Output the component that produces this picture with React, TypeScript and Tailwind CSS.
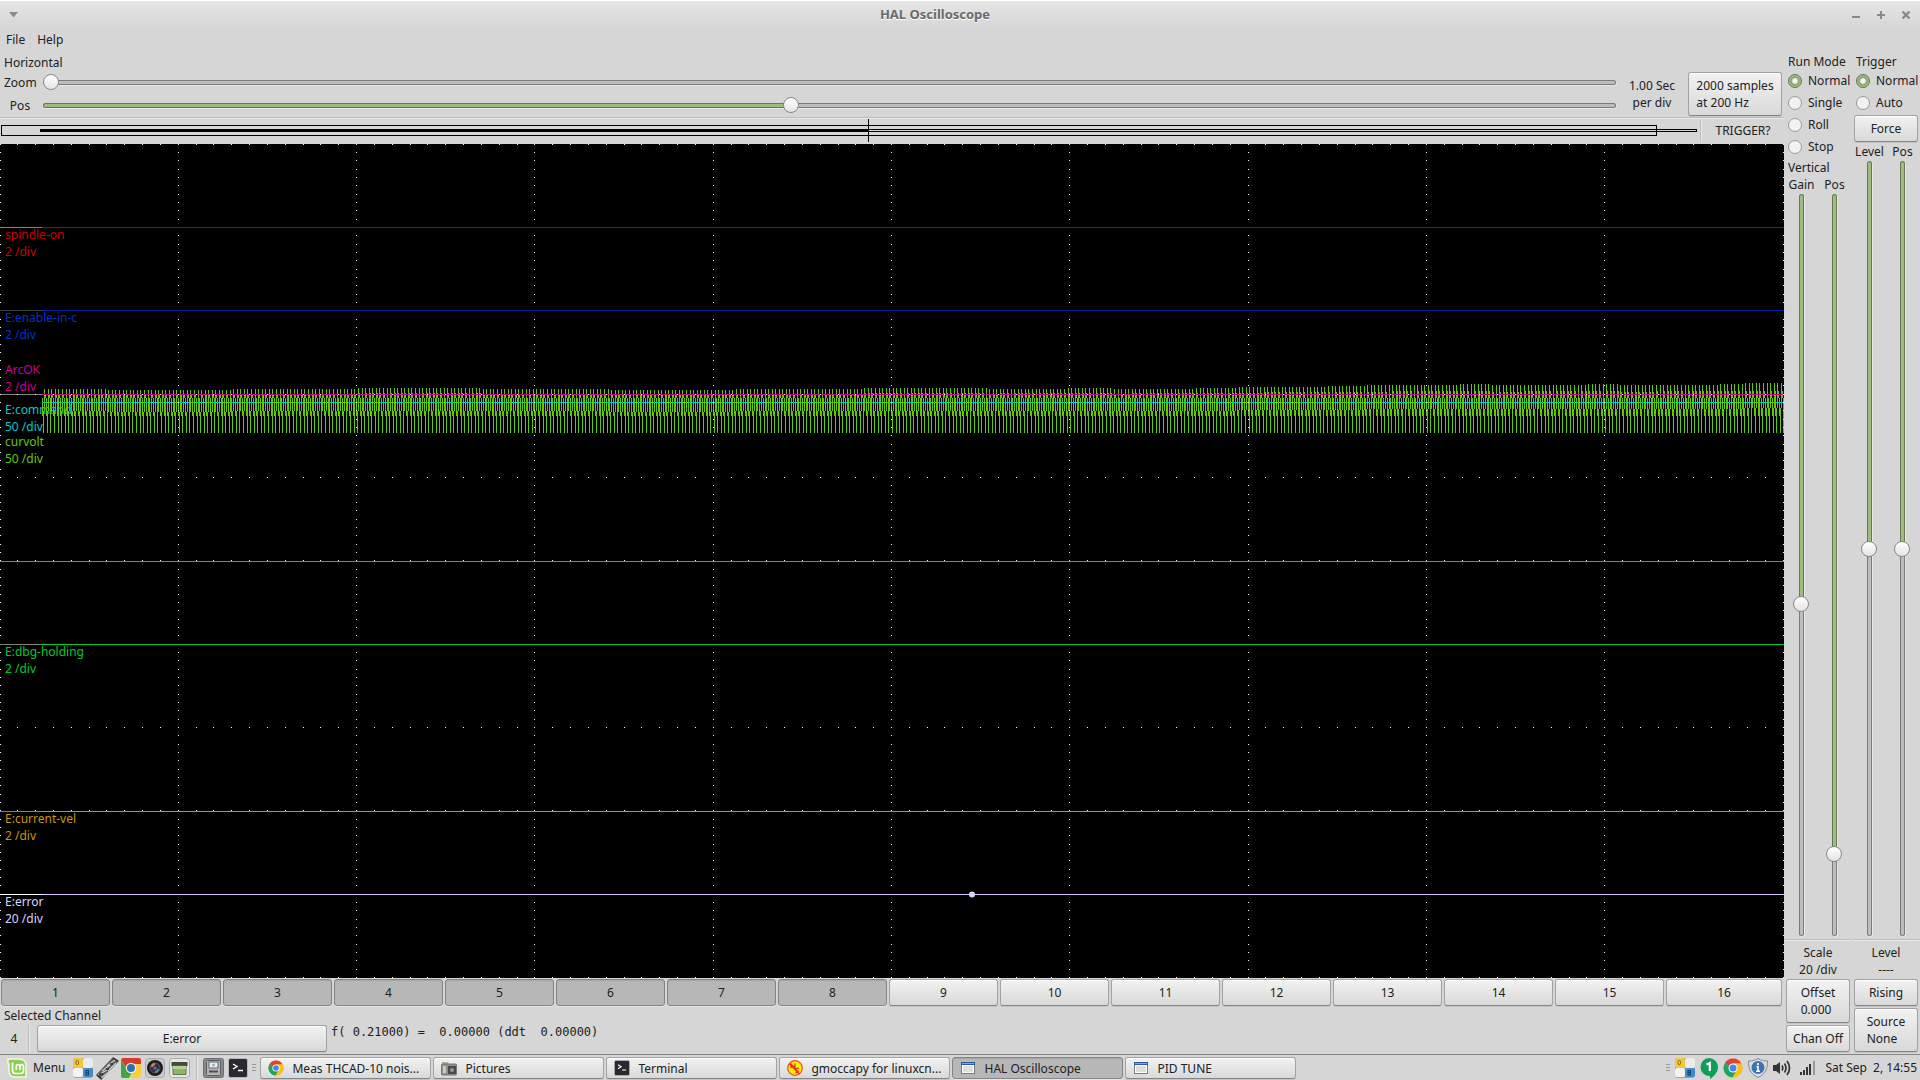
import React, { useId, useState } from 'react';
import clsx from 'clsx';

interface IChannel {
  name: string;
  scale: string;
  className: string;
  top: number;
}

interface ITrace {
  y: number;
  color: string;
  base: string;
}

const PLOT_W = 1784;
const PLOT_H = 834;

const channels: IChannel[] = [
  { name: 'spindle-on', scale: '2 /div', className: 'text-[#c80000]', top: 82 },
  { name: 'E:enable-in-c', scale: '2 /div', className: 'text-[#0032c8]', top: 165 },
  { name: 'ArcOK', scale: '2 /div', className: 'text-[#c80096]', top: 217 },
  { name: 'E:command', scale: '50 /div', className: 'text-[#00c8c8]', top: 257 },
  { name: 'curvolt', scale: '50 /div', className: 'text-[#64c800]', top: 289 },
  { name: 'E:dbg-holding', scale: '2 /div', className: 'text-[#00c832]', top: 499 },
  { name: 'E:current-vel', scale: '2 /div', className: 'text-[#c89600]', top: 666 },
  { name: 'E:error', scale: '20 /div', className: 'text-[#dcd2ff]', top: 749 },
];

const traces: ITrace[] = [
  { y: 83, color: '#b40000', base: '#808080' },
  { y: 166, color: '#001ea0', base: '#404040' },
  { y: 417, color: '#808080', base: '#808080' },
  { y: 500, color: '#00c832', base: '#808080' },
  { y: 667, color: '#c89600', base: '#808080' },
  { y: 750, color: '#dcc8ff', base: '#ffffff' },
];

// Dotted graticule, 10 x 10 divisions with 10 dots each
const buildGrid = () => {
  let d = '';
  for (let row = 0; row <= 10; row++) {
    for (let i = 0; i <= 100; i++) {
      d += `M${Math.floor((1783 * i) / 100)} ${Math.floor((833.4 * row) / 10)}h1v1h-1z`;
    }
  }
  for (let col = 0; col <= 10; col++) {
    for (let i = 0; i <= 100; i++) {
      d += `M${Math.floor((1783 * col) / 10)} ${Math.floor((833.4 * i) / 100)}h1v1h-1z`;
    }
  }
  return d;
};

// 50 Hz ripple sampled at 200 Hz, four samples per cycle
const buildWave = () => {
  const step = 0.8915;
  const value = (i: number) => {
    const x = 42 + i * step;
    const drift = x > 1000 ? ((x - 1000) / 784) * 6 : 0;
    const wobble = Math.round(Math.sin(i / 90) * 0.7);
    return [254, 254, 289, 245 - drift + wobble][i % 4];
  };
  let d = '';
  for (let i = 1; 42 + i * step < PLOT_W; i++) {
    const x = Math.floor(42 + i * step);
    const v = value(i);
    const a = (value(i - 1) + v) / 2;
    const b = (v + value(i + 1)) / 2;
    const top = Math.round(Math.min(a, b, v));
    const bottom = Math.round(Math.max(a, b, v));
    d += `M${x} ${top}h1V${bottom}h-1z`;
  }
  return d;
};

const gridPath = buildGrid();
const wavePath = buildWave();

const Scope = () => (
  <div className="relative min-h-0 flex-1 overflow-hidden bg-black">
    {channels.map((c) => (
      <div
        key={c.name}
        className={clsx('absolute left-[5px] leading-[17px]', c.className)}
        style={{ top: `${(c.top / PLOT_H) * 100}%` }}>
        <p>{c.name}</p>
        <p>{c.scale}</p>
      </div>
    ))}
    <svg
      className="absolute inset-0 h-full w-full"
      viewBox={`0 0 ${PLOT_W} ${PLOT_H}`}
      preserveAspectRatio="none"
      shapeRendering="crispEdges">
      <rect x="0" y="250" width="42" height="1" fill="#808080" />
      <rect x="42" y="258" width="1742" height="1" fill="#00c8c8" />
      <path d={wavePath} fill="#64c800" />
      <path d="M42 258.5H1784" stroke="#00c8a0" strokeDasharray="6 11" />
      <rect x="42" y="250" width="1742" height="1" fill="#c80096" />
      <path d={gridPath} fill="#fff" />
      {traces.map((t) => (
        <g key={t.y}>
          <rect x="0" y={t.y} width="42" height="1" fill={t.base} />
          <rect x="42" y={t.y} width="1742" height="1" fill={t.color} />
        </g>
      ))}
      <circle cx="972" cy="750.5" r="3" fill="#dcd2ff" shapeRendering="auto" />
    </svg>
  </div>
);

interface SliderProps {
  label: string;
  initial: number;
  vertical?: boolean;
}

const thumb =
  '[&::-webkit-slider-thumb]:appearance-none [&::-webkit-slider-thumb]:size-4 [&::-webkit-slider-thumb]:rounded-full [&::-webkit-slider-thumb]:border [&::-webkit-slider-thumb]:border-[#888] [&::-webkit-slider-thumb]:bg-linear-to-b [&::-webkit-slider-thumb]:from-white [&::-webkit-slider-thumb]:to-[#e4e4e4]';
const track =
  '[&::-webkit-slider-runnable-track]:rounded-full [&::-webkit-slider-runnable-track]:shadow-[inset_0_0_0_1px_rgba(0,0,0,0.35),1px_1px_0_#e8e8e8]';

const Slider = ({ label, initial, vertical }: SliderProps) => {
  const [value, setValue] = useState(initial);
  return (
    <input
      type="range"
      aria-label={label}
      min={0}
      max={1000}
      value={value}
      onChange={(e) => setValue(Number(e.target.value))}
      style={{ '--fill': `${value / 10}%` } as React.CSSProperties}
      className={clsx(
        'block cursor-pointer appearance-none bg-transparent',
        thumb,
        track,
        vertical
          ? 'h-full w-4 justify-self-center [writing-mode:vertical-lr] [&::-webkit-slider-runnable-track]:w-[5px] [&::-webkit-slider-runnable-track]:bg-[linear-gradient(to_bottom,#9ebb80_var(--fill),#bdbdbd_var(--fill))] [&::-webkit-slider-thumb]:-ml-[6px]'
          : 'h-4 w-full [&::-webkit-slider-runnable-track]:h-[5px] [&::-webkit-slider-runnable-track]:bg-[linear-gradient(to_right,#9ebb80_var(--fill),#bdbdbd_var(--fill))] [&::-webkit-slider-thumb]:-mt-[6px]'
      )}
    />
  );
};

interface ButtonProps {
  children: React.ReactNode;
  active?: boolean;
  className?: string;
}

const Button = ({ children, active, className }: ButtonProps) => (
  <button
    type="button"
    className={clsx(
      'flex items-center rounded-[3px] border leading-[17px]',
      active
        ? 'border-[#858585] bg-[#b7b7b7] shadow-[inset_0_1px_1px_#a6a6a6,0_1px_0_#e6e6e6]'
        : 'border-[#a3a3a3] border-b-[#858585] bg-linear-to-b from-[#f2f2f2] to-[#d9d9d9] shadow-[inset_0_1px_0_#fff,0_1px_0_#c4c4c4]',
      className
    )}>
    {children}
  </button>
);

const RadioGroup = ({ name, options }: { name: string; options: string[] }) => {
  const id = useId();
  const [selected, setSelected] = useState(options[0]);
  return (
    <div role="radiogroup" aria-label={name}>
      {options.map((o) => (
        <label key={o} className="flex h-[22px] items-center gap-[6px] pl-[3px]">
          <input
            type="radio"
            name={id}
            checked={selected === o}
            onChange={() => setSelected(o)}
            className="size-[14px] shrink-0 appearance-none rounded-full border border-[#999] bg-[#f2f2f2] checked:border-[#5f7350] checked:bg-[radial-gradient(circle,#f4f4f4_2px,#7c9763_4px,#a3c086_5px)]"
          />
          {o}
        </label>
      ))}
    </div>
  );
};

const HLine = () => <div className="h-[2px] shrink-0 border-b border-[#e8e8e8] bg-[#bdbdbd]" />;
const VLine = () => <div className="w-[2px] shrink-0 self-stretch border-r border-[#e8e8e8] bg-[#bdbdbd]" />;

const TitleBar = () => (
  <header className="flex h-7 shrink-0 items-center border-t border-white bg-linear-to-b from-[#e6e6e6] to-[#d6d6d6] text-[#6a6a6a]">
    <button type="button" aria-label="Window menu" className="flex w-[26px] justify-center">
      <svg width="9" height="6">
        <path d="M0 0h9L4.500 5.500z" fill="#8a8a8a" />
      </svg>
    </button>
    <h1 className="flex-1 text-center text-[13px] font-bold [text-shadow:0_1px_0_#fff]">HAL Oscilloscope</h1>
    <div className="flex w-[76px] justify-end gap-[9px] pr-[6px]">
      <button type="button" aria-label="Minimize" className="size-4">
        <svg width="16" height="16">
          <path d="M4 9h8v2H4z" fill="#8a8a8a" />
        </svg>
      </button>
      <button type="button" aria-label="Maximize" className="size-4">
        <svg width="16" height="16">
          <path d="M4 8h8M8 4v8" stroke="#8a8a8a" strokeWidth="2" />
        </svg>
      </button>
      <button type="button" aria-label="Close" className="size-4">
        <svg width="16" height="16">
          <path d="M4.500 4.500l7 7M11.500 4.500l-7 7" stroke="#8a8a8a" strokeWidth="2.400" />
        </svg>
      </button>
    </div>
  </header>
);

const HorizontalPanel = () => (
  <section className="pt-[2px]">
    <h2 className="pl-1 leading-[17px]">Horizontal</h2>
    <div className="flex h-[46px] items-center">
      <div className="flex-1">
        {[
          { label: 'Zoom', value: 0 },
          { label: 'Pos', value: 475 },
        ].map((s) => (
          <div key={s.label} className="flex h-[23px] items-center gap-[7px] pl-1">
            <span className="w-8 shrink-0 text-center">{s.label}</span>
            <Slider label={`Horizontal ${s.label}`} initial={s.value} />
          </div>
        ))}
      </div>
      <p className="w-[72px] text-center leading-[17px]">
        1.00 Sec
        <br />
        per div
      </p>
      <Button className="mr-[2px] h-11 w-[94px] justify-center text-left">
        2000 samples
        <br />
        at 200 Hz
      </Button>
    </div>
    <HLine />
    <div className="flex h-[25px] pb-[2px]">
      <svg className="h-[23px] min-w-0 flex-1" viewBox="0 0 1700 23" preserveAspectRatio="none" shapeRendering="crispEdges">
        <path d="M1.500 6.500h1655v10H1.500z" fill="none" stroke="#000" />
        <path d="M40.500 10.500h1656v2H40.500z" fill="none" stroke="#000" />
        <path d="M40 10h828v3H40z" />
        <path d="M868 0h1v23h-1z" />
      </svg>
      <VLine />
      <span className="w-[82px] text-center leading-[23px]">TRIGGER?</span>
    </div>
  </section>
);

const channelButtons = Array.from({ length: 16 }, (_, i) => i + 1);

const ChannelPanel = () => (
  <section>
    <div className="grid grid-cols-[repeat(15,109fr)_116fr] gap-[2px] pt-[1px] pr-[2px] pb-[1px] pl-[1px]">
      {channelButtons.map((n) => (
        <Button key={n} active={n <= 8} className="h-[27px] justify-center">
          {n}
        </Button>
      ))}
    </div>
    <h2 className="pl-1 leading-[17px]">Selected Channel</h2>
    <div className="flex h-[30px] pt-[1px]">
      <span className="w-7 text-center leading-[28px]">4</span>
      <VLine />
      <Button className="ml-[7px] h-[27px] w-[290px] justify-center">E:error</Button>
      <output className="ml-1 whitespace-pre font-['DejaVu_Sans_Mono',monospace] leading-[14px]">
        {'f( 0.21000) =  0.00000 (ddt  0.00000)'}
      </output>
    </div>
  </section>
);

const VerticalPanel = () => (
  <section className="flex flex-col">
    <h2 className="pl-[3px] leading-[17px]">Run Mode</h2>
    <RadioGroup name="Run Mode" options={['Normal', 'Single', 'Roll', 'Stop']} />
    <h2 className="mt-[1px] pl-[3px] leading-[17px]">Vertical</h2>
    <div className="mb-[1px] grid grid-cols-2 text-center leading-[17px]">
      <span>Gain</span>
      <span>Pos</span>
    </div>
    <div className="grid min-h-0 flex-1 grid-cols-2">
      <Slider vertical label="Vertical Gain" initial={554} />
      <Slider vertical label="Vertical Pos" initial={898} />
    </div>
    <div className="pt-[3px]">
      <HLine />
      <p className="mt-[3px] mb-[1px] text-center leading-[17px]">
        Scale
        <br />
        20 /div
      </p>
      <Button className="mx-[1px] h-11 w-16 justify-center text-left">
        Offset
        <br />
        0.000
      </Button>
      <Button className="mx-[1px] mt-[2px] h-[27px] w-16 justify-center">Chan Off</Button>
    </div>
  </section>
);

const TriggerPanel = () => (
  <section className="flex flex-col">
    <h2 className="pl-[3px] leading-[17px]">Trigger</h2>
    <RadioGroup name="Trigger" options={['Normal', 'Auto']} />
    <Button className="mx-[1px] mt-[1px] h-[27px] w-16 justify-center">Force</Button>
    <div className="mt-[1px] mb-[1px] grid grid-cols-2 text-center leading-[17px]">
      <span>Level</span>
      <span>Pos</span>
    </div>
    <div className="grid min-h-0 flex-1 grid-cols-2">
      <Slider vertical label="Trigger Level" initial={500} />
      <Slider vertical label="Trigger Pos" initial={500} />
    </div>
    <div className="pt-[3px]">
      <HLine />
      <p className="mt-[3px] mb-[1px] text-center leading-[17px]">
        Level
        <br />
        ----
      </p>
      <Button className="mx-[1px] h-[27px] w-16 justify-center">Rising</Button>
      <Button className="mx-[1px] mt-[2px] h-11 w-16 justify-center text-left">
        Source
        <br />
        None
      </Button>
    </div>
  </section>
);

const MintIcon = () => (
  <svg width="20" height="20" viewBox="0 0 20 20">
    <path d="M1 1h11c5 0 7 3 7 7v11H8c-4 0-6-2-6-6V6H1z" fill="#8fce56" stroke="#f2f7ec" strokeWidth="1.500" />
    <path d="M5.500 4.500v8c0 2 1 3 3 3h5c2 0 3-1 3-3V9c0-3-3.500-3-3.500-.5V12M12.900 9c0-3.500-3.600-3-3.600-.5V12" fill="none" stroke="#fff" strokeWidth="1.700" />
  </svg>
);

const CalcIcon = () => (
  <svg width="20" height="20" viewBox="0 0 20 20">
    <rect x=".5" y=".5" width="19" height="19" rx="2" fill="#b4b4b4" stroke="#a0a0a0" />
    <rect width="10" height="10" rx="2" fill="#f4c63c" />
    <rect x="10" width="10" height="10" rx="2" fill="#ececec" />
    <rect y="10" width="10" height="9" rx="2" fill="#f3f3f3" />
    <rect x="10" y="10" width="10" height="9" rx="2" fill="#3a8dce" />
    <rect x="3" y="2.500" width="2.500" height="4" rx="1" fill="none" stroke="#8a6a10" />
    <path d="M13 12.500v4.500h2.500v-4.500zM13 14.700h2.500" fill="none" stroke="#143c60" />
  </svg>
);

const EndMillIcon = () => (
  <svg width="23" height="23" viewBox="0 0 23 23">
    <path d="M0 18L17 0l6 4L5 23z" fill="#5c5c5c" />
    <path d="M2 18l9-5M6 14l9-7M11 9l8-6M5 21l9-7M12 14l8-8" stroke="#c9c9c9" strokeWidth="1.300" />
    <path d="M1 18l5 4M17 1l5 3M3 17l4 0M10 12l3 0M14 7l3 0" stroke="#2c2c2c" strokeWidth="1.300" />
  </svg>
);

const ChromeWheel = () => (
  <>
    <circle cx="10" cy="10" r="9.500" fill="#fbc116" />
    <path d="M10 10L1.800 5.200A9.500 9.500 0 0 1 18.300 5.500H10z" fill="#dc4437" />
    <path d="M10 10L1.800 5.200A9.500 9.500 0 0 0 9.500 19.500L14 12z" fill="#1da462" />
    <path d="M10 5.500h8.300A9.500 9.500 0 0 1 9.500 19.500L14 12z" fill="#fbc116" />
    <circle cx="10" cy="10" r="4.500" fill="#fff" />
    <circle cx="10" cy="10" r="3.500" fill="#4285f4" />
  </>
);

const ChromeIcon = ({ size = 20 }: { size?: number }) => (
  <svg width={size} height={size} viewBox="0 0 20 20">
    <ChromeWheel />
  </svg>
);

const ChromeSquareIcon = () => (
  <svg width="20" height="20" viewBox="0 0 20 20">
    <path d="M0 2a2 2 0 0 1 2-2h16a2 2 0 0 1 2 2v5H10L7 12z" fill="#d93a2b" />
    <path d="M0 2l6 9 5 3-3 6H2a2 2 0 0 1-2-2z" fill="#3fa549" />
    <path d="M11 6h9v12a2 2 0 0 1-2 2H8l6-9z" fill="#f6cf3a" />
    <circle cx="10" cy="10" r="5.300" fill="#eee" />
    <circle cx="10" cy="10" r="4" fill="#2e6fae" />
  </svg>
);

const CameraIcon = () => (
  <svg width="20" height="20" viewBox="0 0 20 20">
    <rect x=".5" y=".5" width="19" height="19" rx="3" fill="#c9c9ce" stroke="#aaa" />
    <circle cx="10" cy="10" r="8" fill="#1d1d20" />
    <circle cx="10" cy="10" r="5" fill="#35304f" stroke="#55585c" />
    <path d="M7 9a3 3 0 0 1 3-3" stroke="#cf8f4f" strokeWidth="2" fill="none" />
    <path d="M13 11a3 3 0 0 1-3 3" stroke="#3c9a74" strokeWidth="2" fill="none" />
    <circle cx="10" cy="10" r="1.500" fill="#7d5fc4" />
  </svg>
);

const DesktopIcon = () => (
  <svg width="21" height="20" viewBox="0 0 21 20">
    <rect x=".5" y=".5" width="20" height="19" rx="3" fill="#e6e6e6" stroke="#aaa" />
    <path d="M2.500 4h16v4h-16z" fill="#44483f" />
    <path d="M4 8h13v8.500H4z" fill="#8cb864" stroke="#5f7350" />
    <path d="M4 8h13v3H4z" fill="#b3d392" />
  </svg>
);

const DriveIcon = () => (
  <svg width="21" height="20" viewBox="0 0 21 20">
    <rect x=".5" y=".5" width="20" height="19" rx="2" fill="#8a8a8a" stroke="#6e6e6e" />
    <rect x="3.500" y="2.500" width="14" height="15" rx="1" fill="#b5b5b5" stroke="#5e5e5e" />
    <rect x="6" y="4" width="9" height="6" fill="#e8eef2" stroke="#666" />
    <circle cx="10.500" cy="7" r="1.500" fill="#8db6c9" />
    <path d="M6 13.500h9" stroke="#4c4c4c" strokeWidth="2" />
  </svg>
);

const TerminalIcon = ({ size = 20 }: { size?: number }) => (
  <svg width={size} height={size} viewBox="0 0 20 20">
    <rect x=".5" y=".5" width="19" height="19" rx="2" fill="#2a2830" stroke="#b8b8b8" />
    <path d="M5 6l4 2.500L5 11M10 12.500h5" stroke="#fff" strokeWidth="1.400" fill="none" />
  </svg>
);

const PicturesIcon = () => (
  <svg width="16" height="16" viewBox="0 0 16 16">
    <path d="M1 2h6l1 2h7v3H1z" fill="#a5b598" />
    <rect x=".5" y="4" width="15" height="11" rx="1" fill="#8c9286" stroke="#777" />
    <rect x="7" y="6" width="8" height="8" fill="#4b4b4b" />
    <circle cx="11" cy="10" r="2" fill="#999" />
    <path d="M2 6h3v7H2z" fill="#c7cdc1" />
  </svg>
);

const GmoccapyIcon = () => (
  <svg width="16" height="16" viewBox="0 0 16 16">
    <circle cx="8" cy="8" r="7.300" fill="#ffee00" stroke="#f04a2a" strokeWidth="1.200" />
    <path d="M4 8V4l4 4V3.500M12 8.500c-3-1-4 1-2 2s1.500 2.500-1.500 2M2.500 4l10 10" fill="none" stroke="#e8301c" strokeWidth="1.300" />
  </svg>
);

const WindowIcon = () => (
  <svg width="14" height="12" viewBox="0 0 14 12" shapeRendering="crispEdges">
    <rect width="14" height="12" fill="#777d86" />
    <path d="M0 0h14v3H0z" fill="#2a5ba0" />
    <path d="M1 1h12v1H1z" fill="#7aa6dc" />
    <path d="M1 3h12v8H1z" fill="#fff" />
    <path d="M2 4h10v6H2z" fill="#dfe1d9" />
  </svg>
);

const HangoutsIcon = () => (
  <svg width="18" height="21" viewBox="0 0 18 21">
    <path d="M9 0a9 9 0 0 1 9 9c0 5-4 9.500-8 12v-3A9 9 0 0 1 9 0z" fill="#0f9d58" />
    <path d="M6.500 6.500L9.800 5v8" stroke="#fff" strokeWidth="2.200" fill="none" />
  </svg>
);

const ShieldIcon = () => (
  <svg width="20" height="20" viewBox="0 0 20 20">
    <path d="M10 .5c3 2 6 2.500 9.500 2.500 0 8-2 13-9.500 16.500C2.500 16 .5 11 .5 3 4 3 7 2.500 10 .5z" fill="#dcdcdc" stroke="#888" />
    <circle cx="10" cy="9.500" r="6.500" fill="#3f72b5" />
    <path d="M10 5v2M8.500 8.500H10V13M8 13.300h4" stroke="#fff" strokeWidth="1.600" fill="none" />
  </svg>
);

const VolumeIcon = () => (
  <svg width="18" height="16" viewBox="0 0 18 16">
    <path d="M0 5h3l4-3v12l-4-3H0z" fill="#333" />
    <path d="M9 5.500q1.500 2.500 0 5M11.500 3.500q3 4.500 0 9M14 1q5 7 0 14" stroke="#333" strokeWidth="1.700" fill="none" />
  </svg>
);

const SignalIcon = () => (
  <svg width="16" height="14" viewBox="0 0 16 14" shapeRendering="crispEdges">
    <path d="M0 11h2v3H0zM3 9h2v5H3zM6 6h2v8H6zM9 3h2v11H9z" fill="#333" />
    <path d="M13 0h2v14h-2z" fill="#999" />
  </svg>
);

const Grip = () => (
  <svg width="4" height="8" shapeRendering="crispEdges">
    <path d="M0 0h4v1H0zM0 3h4v1H0zM0 6h4v1H0z" fill="#999" />
  </svg>
);

const launchers = [
  { title: 'Calculator', icon: <CalcIcon /> },
  { title: 'LinuxCNC', icon: <EndMillIcon /> },
  { title: 'Chrome', icon: <ChromeSquareIcon /> },
  { title: 'Screenshot', icon: <CameraIcon /> },
  { title: 'Show desktop', icon: <DesktopIcon /> },
];

const tasks = [
  { title: 'Meas THCAD-10 nois...', icon: <ChromeIcon size={16} /> },
  { title: 'Pictures', icon: <PicturesIcon /> },
  { title: 'Terminal', icon: <TerminalIcon size={16} /> },
  { title: 'gmoccapy for linuxcn...', icon: <GmoccapyIcon /> },
  { title: 'HAL Oscilloscope', icon: <WindowIcon />, active: true },
  { title: 'PID TUNE', icon: <WindowIcon /> },
];

const Taskbar = () => (
  <footer className="flex h-[26px] shrink-0 items-center border-t border-[#858585] pt-[1px] pr-[3px] pl-[7px]">
    <button type="button" className="flex items-center gap-[6px]">
      <MintIcon />
      Menu
    </button>
    <div className="ml-[6px] flex items-center">
      {launchers.map((l) => (
        <button key={l.title} type="button" title={l.title} className="flex w-6 justify-center">
          {l.icon}
        </button>
      ))}
    </div>
    <div className="mx-[5px] flex h-full">
      <VLine />
    </div>
    <div className="flex items-center gap-1">
      <button type="button" title="Files">
        <DriveIcon />
      </button>
      <button type="button" title="Terminal">
        <TerminalIcon />
      </button>
      <Grip />
    </div>
    <div className="ml-1 flex flex-1 gap-[2px]">
      {tasks.map((t) => (
        <Button key={t.title} active={t.active} className="h-[22px] w-[171px] pl-[7px]">
          <span className="mr-2 flex w-4 justify-center">{t.icon}</span>
          <span className="truncate">{t.title}</span>
        </Button>
      ))}
    </div>
    <div className="flex items-center gap-[5px]">
      <Grip />
      <CalcIcon />
      <HangoutsIcon />
      <ChromeIcon />
      <ShieldIcon />
      <VolumeIcon />
      <span className="mx-1">
        <SignalIcon />
      </span>
      <time className="whitespace-pre">Sat Sep  2, 14:55</time>
    </div>
  </footer>
);

export default function App() {
  return (
    <div className="flex h-screen flex-col overflow-hidden bg-[#d6d6d6] font-['Noto_Sans',sans-serif] text-[12px] text-[#212121]">
      <TitleBar />
      <nav className="flex h-6 shrink-0 items-center gap-3 pl-[6px]">
        <button type="button">File</button>
        <button type="button">Help</button>
      </nav>
      <main className="flex min-h-0 flex-1">
        <div className="flex min-w-0 flex-1 flex-col">
          <HorizontalPanel />
          <Scope />
          <ChannelPanel />
        </div>
        <aside className="grid w-[136px] shrink-0 grid-cols-2 gap-[2px] px-[1px] pt-[1px] pb-[2px]">
          <VerticalPanel />
          <TriggerPanel />
        </aside>
      </main>
      <Taskbar />
    </div>
  );
}
